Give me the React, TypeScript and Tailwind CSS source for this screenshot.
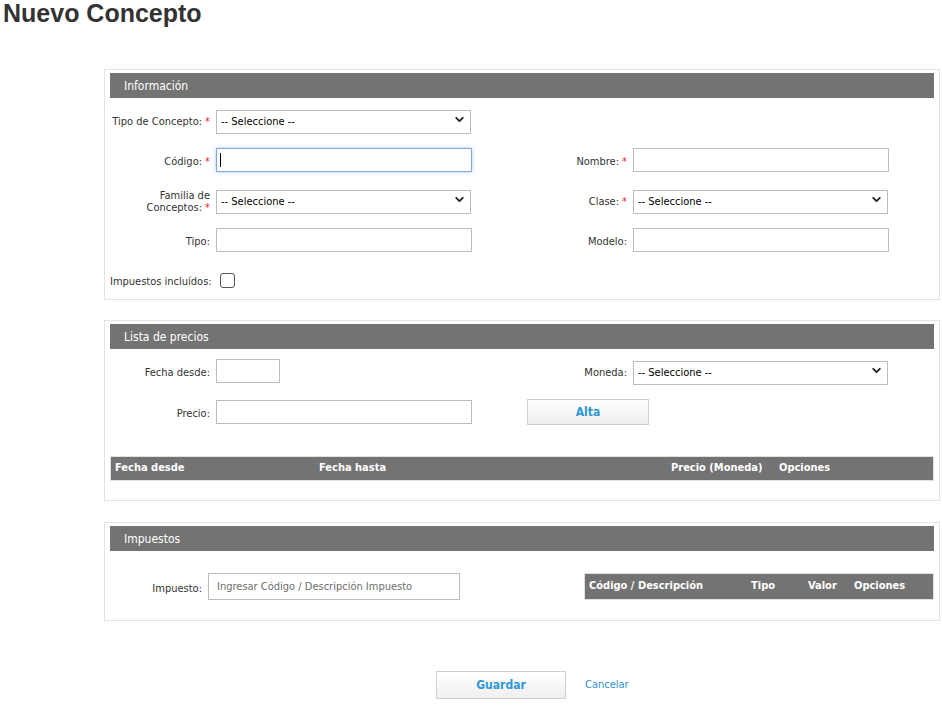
import { ChevronDown } from 'lucide-react';

const font = "font-['DejaVu_Sans_Condensed','DejaVu_Sans',sans-serif]";

function Req() {
    return <span className="text-[#e4202b] ml-[3px]">*</span>;
}

function Label({ children, w = 'w-[100px]', nowrap = false }: { children: React.ReactNode; w?: string; nowrap?: boolean }) {
    return (
        <label className={`${w} shrink-0 relative top-[2px] text-right text-[11px] leading-[12px] text-[#333] ${nowrap ? 'whitespace-nowrap' : ''}`}>
            {children}
        </label>
    );
}

function TextInput({ w = 'w-[256px]', focused = false }: { w?: string; focused?: boolean }) {
    return (
        <div className="relative">
            <input
                type="text"
                className={`${w} h-[24px] bg-white outline-none ${focused ? 'border border-[#7fa8e0] shadow-[0_0_4px_rgba(80,140,220,0.45)]' : 'border border-[#bdbdbd]'}`}
            />
            {focused && <span className="absolute left-[4px] top-[5px] h-[14px] w-px bg-black" />}
        </div>
    );
}

function Select({ w = 'w-[255px]' }: { w?: string }) {
    return (
        <div className={`relative ${w} h-[24px]`}>
            <select className="w-full h-full appearance-none border border-[#bdbdbd] bg-white pl-[4px] text-[11px] text-black outline-none">
                <option>-- Seleccione --</option>
            </select>
            <ChevronDown size={13} strokeWidth={3.5} className="absolute right-[5px] top-[5px] text-[#222] pointer-events-none" />
        </div>
    );
}

function PanelHeader({ title }: { title: string }) {
    return (
        <div className="h-[25px] bg-[#737373] pl-[14px] flex items-center text-[12px] text-white">
            {title}
        </div>
    );
}

function Half({ children, right = false }: { children: React.ReactNode; right?: boolean }) {
    return (
        <div className={`${right ? 'flex-1' : 'w-[417px] shrink-0'} flex items-center gap-[6px]`}>
            {children}
        </div>
    );
}

export default function App() {
    return (
        <div className={`${font} w-[942px] h-[706px] bg-white`}>
            <h1 className="font-['Liberation_Sans',Arial,sans-serif] font-bold text-[25px] leading-[26px] text-[#333] pl-[3px]">
                Nuevo Concepto
            </h1>

            <div className="ml-[104px] w-[836px] mt-[43px]">
                {/* Información */}
                <div className="border border-[#e4e4dc] px-[5px] pt-[3px] pb-[7px]">
                    <PanelHeader title="Información" />
                    <div className="mt-[10px] flex flex-col gap-[16px]">
                        <div className="flex">
                            <Half>
                                <Label>Tipo de Concepto:<Req /></Label>
                                <Select />
                            </Half>
                        </div>
                        <div className="flex">
                            <Half>
                                <Label>Código:<Req /></Label>
                                <TextInput focused />
                            </Half>
                            <Half right>
                                <Label>Nombre:<Req /></Label>
                                <TextInput />
                            </Half>
                        </div>
                        <div className="flex">
                            <Half>
                                <Label>Familia de Conceptos:<Req /></Label>
                                <Select />
                            </Half>
                            <Half right>
                                <Label>Clase:<Req /></Label>
                                <Select />
                            </Half>
                        </div>
                        <div className="flex">
                            <Half>
                                <Label>Tipo:</Label>
                                <TextInput />
                            </Half>
                            <Half right>
                                <Label>Modelo:</Label>
                                <TextInput />
                            </Half>
                        </div>
                        <div className="flex h-[24px]">
                            <Half>
                                <Label nowrap>Impuestos incluídos:</Label>
                                <span className="ml-[4px] w-[15px] h-[15px] rounded-[3px] border border-[#555] bg-white" />
                            </Half>
                        </div>
                    </div>
                </div>

                {/* Lista de precios */}
                <div className="mt-[20px] border border-[#e4e4dc] px-[5px] pt-[3px] pb-[19px]">
                    <PanelHeader title="Lista de precios" />
                    <div className="mt-[10px] flex flex-col gap-[16px]">
                        <div className="flex">
                            <Half>
                                <Label>Fecha desde:</Label>
                                <TextInput w="w-[64px]" />
                            </Half>
                            <Half right>
                                <Label>Moneda:</Label>
                                <Select />
                            </Half>
                        </div>
                        <div className="flex">
                            <Half>
                                <Label>Precio:</Label>
                                <TextInput />
                            </Half>
                            <div className="flex-1 flex items-center">
                                <button className="w-[122px] h-[26px] border border-[#cfcfcf] bg-gradient-to-b from-white to-[#efefef] text-[12px] font-bold text-[#2f97d6]">
                                    Alta
                                </button>
                            </div>
                        </div>
                    </div>
                    <div className="mt-[31px] h-[25px] bg-[#737373] border border-[#e2e2da] flex items-center text-[11px] font-bold text-white">
                        <div className="w-[208px] pl-[4px]">Fecha desde</div>
                        <div className="w-[352px]">Fecha hasta</div>
                        <div className="w-[108px]">Precio (Moneda)</div>
                        <div>Opciones</div>
                    </div>
                </div>

                {/* Impuestos */}
                <div className="mt-[21px] border border-[#e4e4dc] px-[5px] pt-[3px] pb-[20px]">
                    <PanelHeader title="Impuestos" />
                    <div className="mt-[22px] flex items-center">
                        <div className="w-[474px] flex items-center gap-[6px]">
                            <Label w="w-[92px]">Impuesto:</Label>
                            <input
                                type="text"
                                placeholder="Ingresar Código / Descripción Impuesto"
                                className="w-[252px] h-[27px] border border-[#bdbdbd] bg-white pl-[8px] text-[11px] text-[#333] placeholder:text-[#6e6e6e] outline-none"
                            />
                        </div>
                        <div className="w-[350px] h-[27px] bg-[#737373] border border-[#e2e2da] flex items-center text-[11px] font-bold text-white">
                            <div className="w-[166px] pl-[4px]">Código / Descripción</div>
                            <div className="w-[57px]">Tipo</div>
                            <div className="w-[46px]">Valor</div>
                            <div>Opciones</div>
                        </div>
                    </div>
                </div>
            </div>

            <div className="mt-[50px] pl-[436px] flex items-center gap-[19px]">
                <button className="w-[130px] h-[28px] border border-[#cfcfcf] bg-gradient-to-b from-white to-[#efefef] text-[12px] font-bold text-[#2f97d6]">
                    Guardar
                </button>
                <a className="text-[11px] text-[#2f8fd0] cursor-pointer">Cancelar</a>
            </div>
        </div>
    );
}
